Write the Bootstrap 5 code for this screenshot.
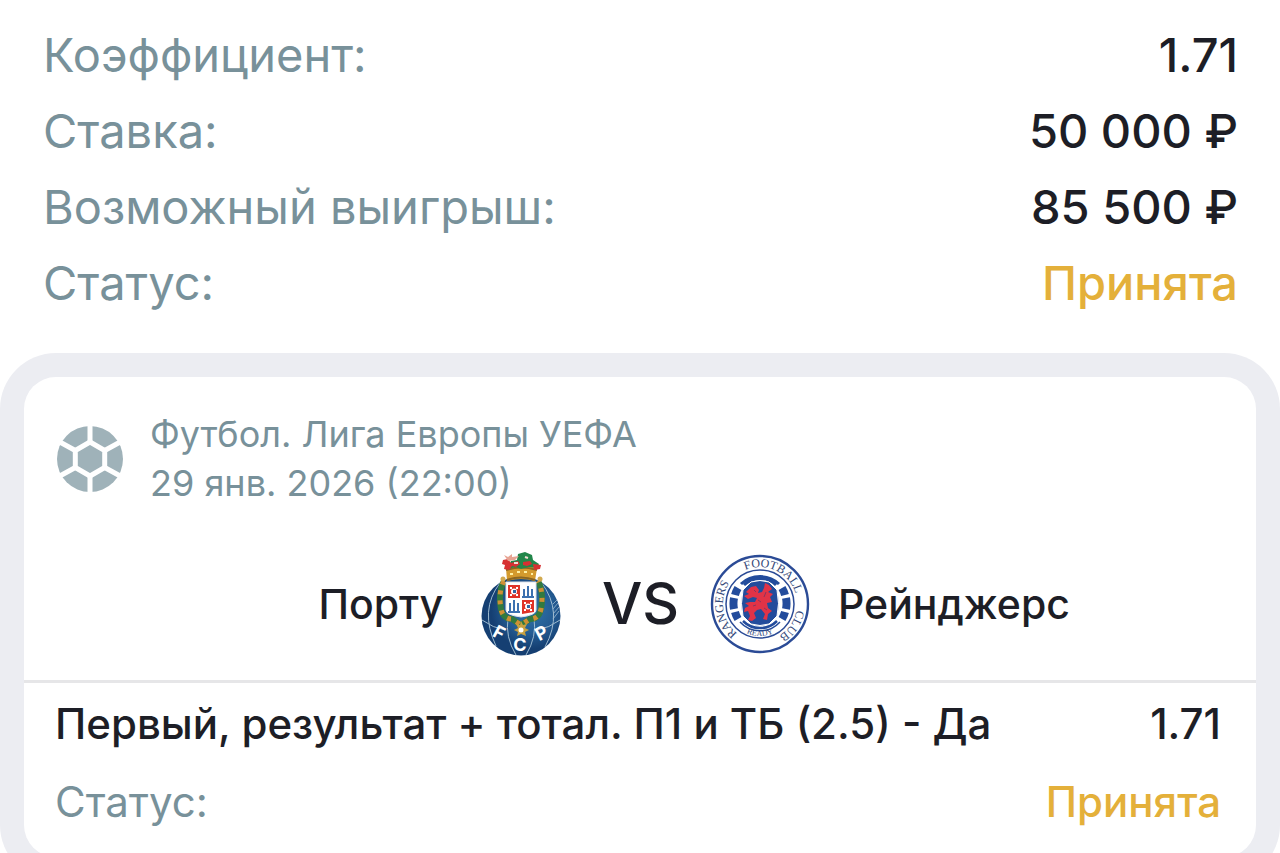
<!DOCTYPE html>
<html lang="ru">
<head>
<meta charset="utf-8">
<meta name="viewport" content="width=device-width, initial-scale=1">
<title>Ставка</title>
<link href="https://cdn.jsdelivr.net/npm/bootstrap@5.3.0/dist/css/bootstrap.min.css" rel="stylesheet">
<script src="https://cdn.jsdelivr.net/npm/bootstrap@5.3.0/dist/js/bootstrap.bundle.min.js" defer></script>
<style>
  body { font-family: Inter, "Noto Sans", sans-serif; color: #1d1e26; background: #fff; }
  body::-webkit-scrollbar { display: none; }
  .summary dt, .picks dt, .summary dd, .picks dd { font-weight: 500; }
  .summary dt.muted, .picks dt.muted, .muted { color: #78919a; font-weight: 400; }
  .accepted { color: #e4b03a; }
  .summary { padding: 17px 42px 32px 43px; font-size: 47px; line-height: 76px; }
  .event-wrap { background: #ecedf2; border-radius: 56px; padding: 24px; }
  .event { border-radius: 32px; background: #fff; }
  .event-head { padding: 33px 32px; gap: 26px; font-size: 36px; line-height: 49px; }
  .teams { padding: 11px 0 24px 1px; font-size: 41px; line-height: 48px; font-weight: 500; }
  .versus { font-size: 57px; line-height: 64px; width: 139px; }
  .team { flex: 1 1 0; gap: 28px; }
  .picks { border-top: 3px solid #e6e6e8; padding: 2px 35px 16px 31px; font-size: 42px; line-height: 78px; }
</style>
</head>
<body>
<main>
  <dl class="summary mb-0">
    <div class="d-flex justify-content-between"><dt class="muted">Коэффициент:</dt><dd class="mb-0">1.71</dd></div>
    <div class="d-flex justify-content-between"><dt class="muted">Ставка:</dt><dd class="mb-0">50 000 ₽</dd></div>
    <div class="d-flex justify-content-between"><dt class="muted">Возможный выигрыш:</dt><dd class="mb-0">85 500 ₽</dd></div>
    <div class="d-flex justify-content-between"><dt class="muted">Статус:</dt><dd class="mb-0 accepted">Принята</dd></div>
  </dl>
  <section class="event-wrap">
    <article class="event">
      <header class="event-head d-flex align-items-center muted">
        <svg width="68" height="68" viewBox="0 0 68 68" aria-hidden="true">
          <circle cx="34" cy="34" r="33" fill="#9fb2b9"/>
          <g fill="none" stroke="#fff" stroke-width="5">
            <path d="M34 17 48.700 25.500v17L34 51 19.300 42.500v-17Z"/>
            <path d="M34 17V0M48.700 25.500 66 16M48.700 42.500 66 52M34 51V68M19.300 42.500 2 52M19.300 25.500 2 16"/>
          </g>
        </svg>
        <div>Футбол. Лига Европы УЕФА<br>29 янв. 2026 (22:00)</div>
      </header>
      <div class="teams d-flex align-items-center">
        <div class="team d-flex align-items-center justify-content-end">
          <span>Порту</span>
          <svg width="100" height="104" viewBox="-2 0 100 104" role="img" aria-label="Порту">
            <defs><radialGradient id="ball" cx="62%" cy="42%"><stop offset="0" stop-color="#2f75ab"/><stop offset=".6" stop-color="#245c93"/><stop offset="1" stop-color="#153f72"/></radialGradient></defs>
            <circle cx="48" cy="64" r="39.500" fill="url(#ball)"/>
            <g fill="none" stroke="#9ebbd0" stroke-width="1">
              <path d="M27 31Q6 58 23 94M35 66Q32 85 43 103M61 66Q64 85 53 103M68 30Q91 60 72 95M9 68Q20 76 32 78M64 78Q76 76 87 68"/>
              <path d="M80 52l4-4M80 57l5-6M80 62l6-7M80 67l6-8" stroke-width=".8"/>
            </g>
            <path d="M31 29Q25 40 28 57 30 67 39 67L48 73 57 67Q66 67 68 57 71 40 65 29" fill="none" stroke="#327a3f" stroke-width="6"/>
            <path d="M31 29Q25 40 28 57 30 67 39 67L48 73 57 67Q66 67 68 57 71 40 65 29" fill="none" stroke="#cf8f35" stroke-width="5" stroke-dasharray="4 6"/>
            <path d="M33 30h30v28q0 5-15 7-15-2-15-7Z" fill="#fff" stroke="#dee3eb"/>
            <g fill="#df3328"><path d="M35 33h12v13H35ZM49 48h12v12l-12 2Z"/></g>
            <g fill="#fff"><path d="M37 35h2v2h-2Zm6 0h2v2h-2Zm-6 7h2v2h-2Zm6 0h2v2h-2ZM51 50h2v2h-2Zm6 0h2v2h-2Zm-6 7h2v2h-2Zm6 0h2v2h-2Z"/><circle cx="41" cy="39.500" r="3"/><circle cx="55" cy="54.500" r="3"/></g>
            <path d="M40 38h3v3h-3ZM54 53h3v3h-3Z" fill="#3465a1"/>
            <g fill="#3c71b0"><path d="M49 44h12v2H49ZM50 37h2v7h-2ZM54 34h2v10h-2ZM58 37h2v7h-2ZM35 59h12v2H35ZM36 51h2v8h-2ZM40 48h2v11h-2ZM44 51h2v8h-2Z"/></g>
            <path d="M48 69l2 4 4-1-2 4 4 2-4 2 1 4-5-2-4 2 1-4-4-2 4-2-2-4 4 1Z" fill="#c8a141"/><circle cx="48" cy="78" r="2.500" fill="#fff"/>
            <path d="M33 16Q48 11 64 16L62 29Q48 25 34 29Z" fill="#d49a2d"/>
            <path d="M33 18Q48 13 64 18M34 28Q48 23 62 28" stroke="#8c6621" stroke-width="2" fill="none"/>
            <path d="M37 22h3m4-2h3m4 0h3m4 2h2" stroke="#fff0a2" stroke-width="2"/>
            <path d="M35 15l3-6 6-1 1-6 7-2 7 3 1 5 6 4-2 4-8-1-8 2-5-2-5 1Z" fill="#22864a"/>
            <path d="M30 8l5-1 3 4 7-2 2 3-4 3-4-1-3 4-5-1 1-4-3-1ZM50 10l7-1 2 3-5 2-4-1ZM60 12l8 1-1 4-6 1Z" fill="#d63032"/>
            <path d="M31 3l4 2 4-3 0 3 7-1-4 4-7 1Z" fill="#e7a493"/>
            <path d="M41 11l4 0M52 5l3 1" stroke="#f3dcd2" stroke-width="2"/>
            <circle cx="30" cy="27" r="2.500" fill="#d2aa50"/><circle cx="67" cy="27" r="2.500" fill="#d2aa50"/>
            <g fill="#fff" font-family="Inter, sans-serif" font-size="18" font-weight="700" text-anchor="middle">
              <text x="26" y="87" transform="rotate(28 26 81)">F</text><text x="47" y="99">C</text><text x="69" y="88" transform="rotate(-28 69 82)" dy="-1">P</text>
            </g>
          </svg>
        </div>
        <span class="versus text-center">VS</span>
        <div class="team d-flex align-items-center">
          <svg width="100" height="100" viewBox="0 0 100 100" role="img" aria-label="Рейнджерс">
            <defs>
              <path id="ring" d="M50 87A37 37 0 1 1 50 13A37 37 0 1 1 50 87"/>
              <path id="ringFoot" d="M18 50A32 32 0 0 0 82 50"/>
            </defs>
            <g fill="#fff" stroke="#2b4b96"><circle cx="50" cy="50" r="48" stroke-width="2.400"/><circle cx="50" cy="50" r="34" stroke-width="1.500"/></g>
            <g fill="none" stroke="#234c9c">
              <path d="M31 30A28 28 0 0 1 69 30" stroke-width="3"/>
              <path d="M34 31A23 23 0 0 1 66 31" stroke-width="3"/>
              <path d="M33 67A24 24 0 0 0 67 67" stroke-width="2.500"/>
              <path d="M30 68A27 27 0 0 0 70 68" stroke-width="1.500"/>
              <g stroke-width="8"><path d="M28 34A27 27 0 0 0 25 41M24 44A28 28 0 0 0 24 55M25 58A27 27 0 0 0 28 65M72 34A27 27 0 0 1 75 41M76 44A28 28 0 0 1 76 55M75 58A27 27 0 0 1 72 65"/></g>
            </g>
            <path d="M41 28Q50 25 59 28L67 36Q70 50 67 62L59 70Q50 73 41 70L33 62Q30 50 33 36Z" fill="#234c9c" stroke="#fff" stroke-width="1"/>
            <path d="M38 36l3-3 5-1 3 4-1 3 4-1 2-4 1-5 4 2 3 4-4 3 5 2-3 3 2 5-5 1 1 5 4 3-4 3-1 6-4-1 2-5-4-5-4 1-3 3 2 5-4 3-4-1 2-4-2-5-4 1 1-4 4-2-4-3 5-1 5 0 2-4-4-1-5 2-4-3 5-2-3-2Z" fill="#e13347"/>
            <path d="M44 36l2 2M48 46l3 2M56 38l-2 5M43 52l3-1M54 54l3 2" stroke="#8a355e" stroke-width="1"/>
            <g fill="#344879" font-family="'Liberation Serif', serif" font-size="12" text-anchor="middle">
              <text><textPath href="#ring" startOffset="22.5%">RANGERS</textPath></text>
              <text><textPath href="#ring" startOffset="57%">FOOTBALL</textPath></text>
              <text><textPath href="#ring" startOffset="84.500%">CLUB</textPath></text>
              <text font-size="8"><textPath href="#ringFoot" startOffset="50%">READY</textPath></text>
            </g>
          </svg>
          <span>Рейнджерс</span>
        </div>
      </div>
      <dl class="picks mb-0">
        <div class="d-flex justify-content-between"><dt>Первый, результат + тотал. П1 и ТБ (2.5) - Да</dt><dd class="mb-0">1.71</dd></div>
        <div class="d-flex justify-content-between"><dt class="muted">Статус:</dt><dd class="mb-0 accepted">Принята</dd></div>
      </dl>
    </article>
  </section>
</main>
</body>
</html>
